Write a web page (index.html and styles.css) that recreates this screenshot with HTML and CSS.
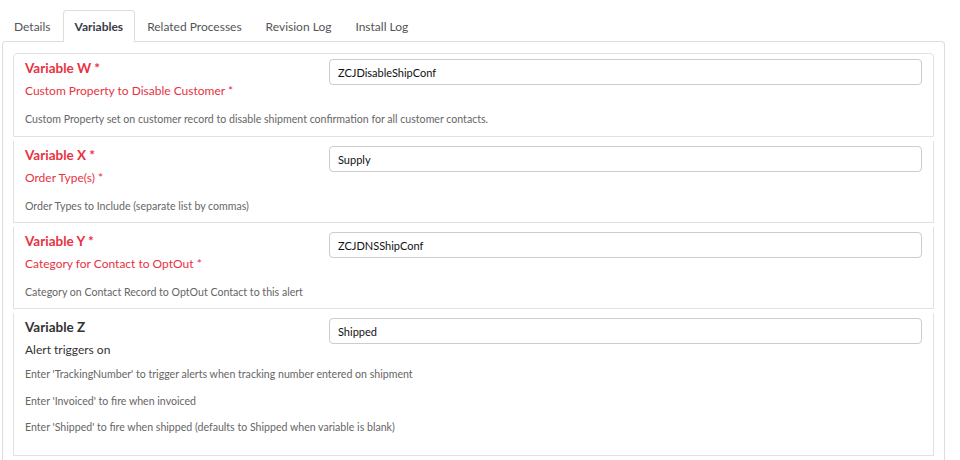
FILE: index.html
```html
<!DOCTYPE html>
<html>
<head>
<meta charset="utf-8">
<link rel="stylesheet" href="styles.css">
</head>
<body>
<div class="page">
  <ul class="tabs">
    <li class="tab">Details</li>
    <li class="tab active">Variables</li>
    <li class="tab">Related Processes</li>
    <li class="tab">Revision Log</li>
    <li class="tab">Install Log</li>
  </ul>
  <div class="panel">
    <div class="card first">
      <div class="card-row">
        <div class="labels">
          <div class="var-title required">Variable W *</div>
          <div class="var-label required">Custom Property to Disable Customer *</div>
        </div>
        <div class="field"><input class="input" type="text" value="ZCJDisableShipConf"></div>
      </div>
      <p class="desc">Custom Property set on customer record to disable shipment confirmation for all customer contacts.</p>
    </div>
    <div class="card">
      <div class="card-row">
        <div class="labels">
          <div class="var-title required">Variable X *</div>
          <div class="var-label required">Order Type(s) *</div>
        </div>
        <div class="field"><input class="input" type="text" value="Supply"></div>
      </div>
      <p class="desc">Order Types to Include (separate list by commas)</p>
    </div>
    <div class="card">
      <div class="card-row">
        <div class="labels">
          <div class="var-title required">Variable Y *</div>
          <div class="var-label required">Category for Contact to OptOut *</div>
        </div>
        <div class="field"><input class="input" type="text" value="ZCJDNSShipConf"></div>
      </div>
      <p class="desc">Category on Contact Record to OptOut Contact to this alert</p>
    </div>
    <div class="card tall">
      <div class="card-row">
        <div class="labels">
          <div class="var-title">Variable Z</div>
          <div class="var-label">Alert triggers on</div>
        </div>
        <div class="field"><input class="input" type="text" value="Shipped"></div>
      </div>
      <p class="desc">Enter 'TrackingNumber' to trigger alerts when tracking number entered on shipment</p>
      <p class="desc">Enter 'Invoiced' to fire when invoiced</p>
      <p class="desc">Enter 'Shipped' to fire when shipped (defaults to Shipped when variable is blank)</p>
    </div>
    <div class="card empty"></div>
  </div>
</div>
</body>
</html>
```
FILE: styles.css
```css
html, body {
  margin: 0;
  padding: 0;
  background: #fff;
  overflow: hidden;
}
body {
  font-family: Lato, "Open Sans", sans-serif;
  color: #333;
}
.page {
  padding: 10px 15px 0 2px;
  height: 460px;
  box-sizing: border-box;
  overflow: hidden;
}
.tabs {
  list-style: none;
  margin: 0;
  padding: 0;
  display: flex;
  height: 31px;
  position: relative;
  z-index: 1;
}
.tab {
  padding: 0 11px;
  font-size: 12px;
  line-height: 31px;
  color: #555;
  border: 1px solid transparent;
  border-bottom: none;
  border-radius: 4px 4px 0 0;
  height: 32px;
  box-sizing: border-box;
}
.tab.active {
  font-weight: bold;
  color: #3a3a48;
  border-color: #ddd;
  background: #fff;
}
.panel {
  border: 1px solid #ddd;
  border-bottom: none;
  border-radius: 4px 4px 0 0;
  padding: 11px 10px 0 10px;
  height: 460px;
  box-sizing: border-box;
}
.card {
  border: 1px solid #e2e2e2;
  border-top: none;
  margin-top: 4px;
  padding: 5px 11px 0 11px;
  height: 82px;
  box-sizing: border-box;
}
.card.first {
  border-top: 1px solid #e2e2e2;
  border-radius: 4px 4px 0 0;
  margin-top: 0;
  height: 84px;
}
.card.tall {
  height: 143px;
}
.card.empty {
  height: 20px;
}
.card-row {
  display: flex;
}
.labels {
  width: 304px;
  flex: none;
}
.field {
  flex: 1;
}
.var-title {
  font-size: 13.5px;
  font-weight: bold;
  line-height: 18px;
  margin-top: 0;
  color: #333;
}
.var-label {
  font-size: 12px;
  line-height: 18px;
  margin-top: 5px;
  color: #333;
}
.required {
  color: #e8323f;
}
.input {
  display: block;
  width: 100%;
  box-sizing: border-box;
  height: 26px;
  border: 1px solid #ccc;
  border-radius: 4px;
  padding: 0 8px;
  font-family: Lato, "Open Sans", sans-serif;
  font-size: 11px;
  color: #111;
  background: #fff;
}
.desc {
  margin: 12px 0 0 0;
  font-size: 10.6px;
  line-height: 14px;
  color: #666;
}
.card.tall .desc {
  margin-top: 12.5px;
}
.card.tall .card-row + .desc {
  margin-top: 8px;
}
```
